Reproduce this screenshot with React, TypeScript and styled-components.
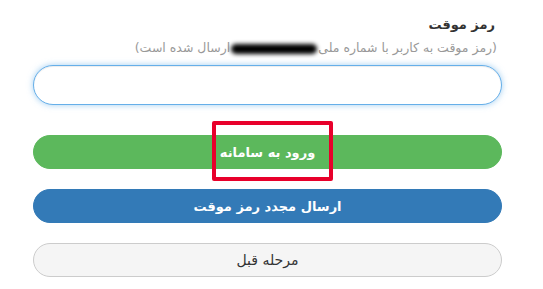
import styled, { createGlobalStyle } from "styled-components";

const GlobalStyle = createGlobalStyle`
  html, body {
    margin: 0;
    padding: 0;
    background: #fff;
  }
  body {
    font-family: "DejaVu Sans", "Noto Sans", sans-serif;
    color: #333;
  }
`;

const Wrapper = styled.div`
  width: 469px;
  margin-left: 33px;
  padding-top: 15px;
  direction: rtl;
  display: flex;
  flex-direction: column;
`;

const Label = styled.label`
  display: block;
  padding-right: 7px;
  font-size: 13px;
  font-weight: bold;
  line-height: 20px;
  color: #333;
`;

const Hint = styled.div`
  padding-right: 5px;
  margin-top: 3px;
  font-size: 12.5px;
  line-height: 20px;
  color: #999;
  white-space: nowrap;
`;

const Redacted = styled.span`
  display: inline-block;
  width: 86px;
  height: 10px;
  margin: 0 1px;
  vertical-align: middle;
  background: #000;
  border-radius: 6px;
  filter: blur(2px);
`;

const Input = styled.input`
  box-sizing: border-box;
  width: 100%;
  height: 40px;
  margin-top: 7px;
  padding: 0 14px;
  border: 1px solid #66afe9;
  border-radius: 20px;
  outline: none;
  box-shadow: inset 0 1px 1px rgba(0, 0, 0, 0.075),
    0 0 6px rgba(102, 175, 233, 0.6);
  font-family: inherit;
  font-size: 14px;
  direction: rtl;
`;

const Actions = styled.div`
  position: relative;
  display: flex;
  flex-direction: column;
  gap: 20px;
  margin-top: 30px;
`;

const Button = styled.button<{ $variant: "success" | "primary" | "default" }>`
  box-sizing: border-box;
  width: 100%;
  height: 34px;
  border-radius: 17px;
  font-family: inherit;
  font-size: ${(p) => (p.$variant === "default" ? "14px" : "13px")};
  direction: rtl;
  cursor: pointer;
  border: 1px solid
    ${(p) =>
      p.$variant === "success"
        ? "#5cb85c"
        : p.$variant === "primary"
        ? "#337ab7"
        : "#ccc"};
  background: ${(p) =>
    p.$variant === "success"
      ? "#5cb85c"
      : p.$variant === "primary"
      ? "#337ab7"
      : "#f5f5f5"};
  color: ${(p) => (p.$variant === "default" ? "#333" : "#fff")};
  font-weight: ${(p) => (p.$variant === "default" ? "normal" : "bold")};
`;

const Highlight = styled.div`
  position: absolute;
  top: -14px;
  left: 179px;
  width: 121px;
  height: 60px;
  box-sizing: border-box;
  border: 4px solid #e8002b;
  border-radius: 2px;
  pointer-events: none;
`;

export default function App() {
  return (
    <>
      <GlobalStyle />
      <Wrapper>
        <Label>رمز موقت</Label>
        <Hint>
          (رمز موقت به کاربر با شماره ملی
          <Redacted />
          ارسال شده است)
        </Hint>
        <Input type="text" />
        <Actions>
          <Button $variant="success">ورود به سامانه</Button>
          <Button $variant="primary">ارسال مجدد رمز موقت</Button>
          <Button $variant="default">مرحله قبل</Button>
          <Highlight />
        </Actions>
      </Wrapper>
    </>
  );
}
